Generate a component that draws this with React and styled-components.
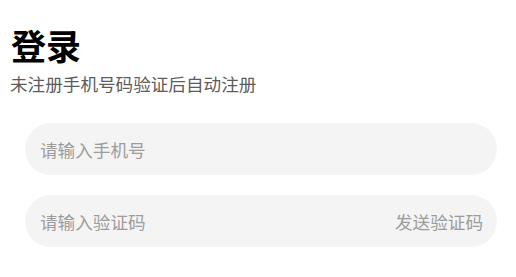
import React from 'react';
import styled, { createGlobalStyle } from 'styled-components';

const GlobalStyle = createGlobalStyle`
  html, body {
    margin: 0;
    padding: 0;
    background: #ffffff;
    font-family: "Noto Sans CJK SC", "Noto Sans", sans-serif;
  }
`;

const Page = styled.div`
  display: flex;
  flex-direction: column;
  padding: 26px 19px 0 10px;
`;

const Title = styled.h1`
  margin: 0 0 0 1px;
  font-size: 35px;
  line-height: 38px;
  font-weight: 700;
  color: #000;
`;

const Subtitle = styled.p`
  margin: 8px 0 0;
  font-size: 17.6px;
  line-height: 24px;
  color: #5c5c5c;
`;

const Form = styled.div`
  display: flex;
  flex-direction: column;
  gap: 20px;
  margin: 27px 0 0 15px;
`;

const Field = styled.div`
  display: flex;
  align-items: center;
  justify-content: space-between;
  height: 52px;
  padding: 0 14px 0 15px;
  border-radius: 26px;
  background: #f4f4f4;
`;

const Input = styled.input`
  flex: 1;
  min-width: 0;
  border: none;
  outline: none;
  background: transparent;
  padding: 0;
  font-family: inherit;
  font-size: 17.6px;
  color: #333;
  &::placeholder {
    color: #9c9c9c;
  }
`;

const SendCode = styled.button`
  border: none;
  background: transparent;
  padding: 0;
  font-family: inherit;
  font-size: 17.6px;
  color: #9c9c9c;
  cursor: pointer;
`;

export default function App() {
  return (
    <>
      <GlobalStyle />
      <Page>
        <Title>登录</Title>
        <Subtitle>未注册手机号码验证后自动注册</Subtitle>
        <Form>
          <Field>
            <Input placeholder="请输入手机号" />
          </Field>
          <Field>
            <Input placeholder="请输入验证码" />
            <SendCode>发送验证码</SendCode>
          </Field>
        </Form>
      </Page>
    </>
  );
}
